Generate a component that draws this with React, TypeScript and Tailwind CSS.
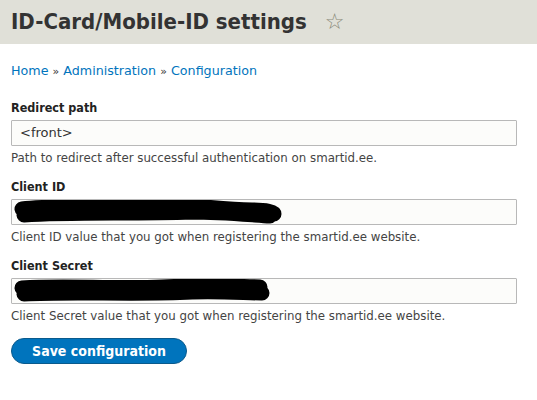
import React from "react";

const font = { fontFamily: '"DejaVu Sans", "Lucida Grande", Verdana, sans-serif' };
const bold = { fontFamily: '"DejaVu Sans Condensed", "DejaVu Sans", "Lucida Grande", sans-serif' };

function Scribble({ variant }: { variant: "a" | "b" }) {
  // redaction blob drawn over the field value
  const d =
    variant === "a"
      ? "M10 9 C40 5 90 8 140 6 C170 3 200 9 240 10 C255 10 262 12 262 14 M12 15 C60 12 120 14 180 12 C210 12 240 15 258 16"
      : "M10 9 C50 6 100 10 150 8 C190 6 220 7 248 8 M12 15 C60 12 120 16 180 13 C210 12 235 14 250 14";
  return (
    <svg width={270} height={24} viewBox="0 0 270 24" className="absolute left-[0px] top-[0px]">
      <path d={d} stroke="#000" strokeWidth={15} strokeLinecap="round" fill="none" />
    </svg>
  );
}

function Field({
  label,
  value,
  description,
  redact,
}: {
  label: string;
  value?: string;
  description: string;
  redact?: "a" | "b";
}) {
  return (
    <div className="mb-[13px]">
      <label className="block text-[12.5px] font-bold text-[#222] mb-[4px] leading-[16px]" style={bold}>
        {label}
      </label>
      <div className="relative h-[26px] w-[506px] border border-[#b8b8b8] bg-[#fcfcfa] rounded-[1px] overflow-hidden">
        {value && (
          <span className="absolute left-[8px] top-[4px] text-[13px] leading-[16px] text-[#333]">{value}</span>
        )}
        {redact && <Scribble variant={redact} />}
      </div>
      <div className="mt-[4px] text-[11.8px] leading-[16px] text-[#444]">{description}</div>
    </div>
  );
}

export default function App() {
  return (
    <div className="w-[537px] h-[400px] bg-white overflow-hidden" style={font}>
      <div className="h-[44px] bg-[#e0e0d8] flex items-center pl-[11px]">
        <h1 className="text-[22px] font-bold text-[#333] leading-none" style={bold}>
          ID-Card/Mobile-ID settings
        </h1>
        <span className="ml-[18px] text-[22px] text-[#8a8a78] leading-none">☆</span>
      </div>
      <div className="px-[11px]">
        <div className="mt-[19px] text-[12.7px] leading-[16px] text-[#0074bd]">
          <a>Home</a> <span className="text-[#333] text-[11px]">»</span> <a>Administration</a>{" "}
          <span className="text-[#333] text-[11px]">»</span> <a>Configuration</a>
        </div>
        <div className="mt-[20px]">
          <Field
            label="Redirect path"
            value="<front>"
            description="Path to redirect after successful authentication on smartid.ee."
          />
          <Field
            label="Client ID"
            redact="a"
            description="Client ID value that you got when registering the smartid.ee website."
          />
          <Field
            label="Client Secret"
            redact="b"
            description="Client Secret value that you got when registering the smartid.ee website."
          />
        </div>
        <button
          className="mt-[1px] h-[26px] w-[176px] rounded-full bg-[#0074bd] border border-[#0a5a8c] text-white text-[14px] font-bold"
          style={bold}
        >
          Save configuration
        </button>
      </div>
    </div>
  );
}
